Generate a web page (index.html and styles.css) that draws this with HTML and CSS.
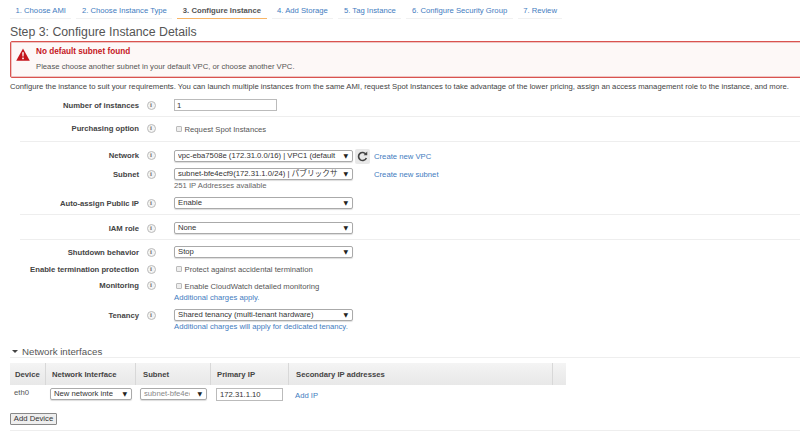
FILE: index.html
```html
<!DOCTYPE html>
<html>

	<head>
		<meta charset="UTF-8">
		<title>Step 3: Configure Instance Details</title>
		<link rel="stylesheet" href="styles.css">
	</head>

	<body>
		<ul class="tabs">
			<li>1. Choose AMI</li>
			<li>2. Choose Instance Type</li>
			<li class="active">3. Configure Instance</li>
			<li>4. Add Storage</li>
			<li>5. Tag Instance</li>
			<li>6. Configure Security Group</li>
			<li>7. Review</li>
		</ul>

		<h1>Step 3: Configure Instance Details</h1>

		<div class="alert">
			<svg class="alert-icon" viewBox="0 0 14 13" width="14" height="13">
				<path d="M7 0.5 L13.8 12.8 L0.2 12.8 Z" fill="#c4161c"/>
				<path d="M6.2 4.2 H7.8 L7.5 8.6 H6.5 Z" fill="#fff"/>
				<rect x="6.2" y="9.6" width="1.6" height="1.6" fill="#fff"/>
			</svg>
			<div>
				<div class="alert-title">No default subnet found</div>
				<div class="alert-text">Please choose another subnet in your default VPC, or choose another VPC.</div>
			</div>
		</div>

		<p class="intro">Configure the instance to suit your requirements. You can launch multiple instances from the same AMI, request Spot Instances to take advantage of the lower pricing, assign an access management role to the instance, and more.</p>

		<form>
			<div class="group g1">
				<div class="row">
					<label>Number of instances</label><span class="info">i</span>
					<div class="field"><input class="text wide" type="text" value="1"></div>
				</div>
			</div>

			<div class="group g2">
				<div class="row raised">
					<label>Purchasing option</label><span class="info">i</span>
					<div class="field"><span class="check"></span>Request Spot Instances</div>
				</div>
			</div>

			<div class="group g3">
				<div class="row raised">
					<label>Network</label><span class="info">i</span>
					<div class="field">
						<span class="select"><select><option>vpc-eba7508e (172.31.0.0/16) | VPC1 (default</option></select></span>
						<span class="refresh">
							<svg viewBox="0 0 12 12" width="11" height="11">
								<path d="M9.8 3.6 A4.4 4.4 0 1 0 10.2 7.6" fill="none" stroke="#444" stroke-width="1.8"/>
								<path d="M7.2 4.6 H11.2 V0.6 Z" fill="#444"/>
							</svg>
						</span>
						<a class="create">Create new VPC</a>
					</div>
				</div>
				<div class="row next-subnet">
					<label>Subnet</label><span class="info">i</span>
					<div class="field">
						<span class="select"><select><option>subnet-bfe4ecf9(172.31.1.0/24) | パブリックサブネット</option></select></span>
						<a class="create far">Create new subnet</a>
					</div>
				</div>
				<div class="note">251 IP Addresses available</div>
				<div class="row next-auto">
					<label>Auto-assign Public IP</label><span class="info">i</span>
					<div class="field"><span class="select"><select><option>Enable</option></select></span></div>
				</div>
			</div>

			<div class="group g4">
				<div class="row">
					<label>IAM role</label><span class="info">i</span>
					<div class="field"><span class="select"><select><option>None</option></select></span></div>
				</div>
			</div>

			<div class="group g5">
				<div class="row">
					<label>Shutdown behavior</label><span class="info">i</span>
					<div class="field"><span class="select"><select><option>Stop</option></select></span></div>
				</div>
				<div class="row next">
					<label>Enable termination protection</label><span class="info">i</span>
					<div class="field"><span class="check"></span>Protect against accidental termination</div>
				</div>
				<div class="row next raised">
					<label>Monitoring</label><span class="info">i</span>
					<div class="field"><span class="check"></span>Enable CloudWatch detailed monitoring</div>
				</div>
				<div class="note link">Additional charges apply.</div>
				<div class="row next">
					<label>Tenancy</label><span class="info">i</span>
					<div class="field"><span class="select"><select><option>Shared tenancy (multi-tenant hardware)</option></select></span></div>
				</div>
				<div class="note link">Additional charges will apply for dedicated tenancy.</div>
			</div>
		</form>

		<h2><span class="caret"></span>Network interfaces</h2>

		<table class="devices">
			<tr>
				<th class="c1">Device</th>
				<th class="c2">Network Interface</th>
				<th class="c3">Subnet</th>
				<th class="c4">Primary IP</th>
				<th class="c5">Secondary IP addresses</th>
				<th class="c6"></th>
			</tr>
			<tr>
				<td>eth0</td>
				<td><span class="select small"><select><option>New network interface</option></select></span></td>
				<td><span class="select tiny"><select class="muted"><option>subnet-bfe4ecf9</option></select></span></td>
				<td><input class="text ip" type="text" value="172.31.1.10"></td>
				<td colspan="2"><a class="add-ip">Add IP</a></td>
			</tr>
		</table>

		<button class="add-device" type="button">Add Device</button>
		<div class="end-line"></div>
	</body>

</html>
```

FILE: styles.css
```css
* {
	margin: 0;
	padding: 0;
	box-sizing: border-box;
}

html, body {
	height: 432px;
	overflow: hidden;
}

body {
	background: white;
	color: #555;
	font-family: "Liberation Sans", Arial, "Noto Sans CJK JP", sans-serif;
	font-size: 7.7px;
}

a {
	color: #3f7cc0;
}

.tabs {
	display: flex;
	gap: 5px;
	height: 19px;
	margin: 0 0 0 10px;
	padding-top: 6px;
	list-style: none;
}

.tabs li {
	height: 13px;
	padding: 0 5.5px;
	border-bottom: 1px solid #f1f1f1;
	color: #3f7cc0;
	font-size: 7.7px;
	line-height: 10px;
}

.tabs .active {
	border-bottom-color: #f7b567;
	color: #555;
	font-weight: bold;
}

h1 {
	height: 22px;
	margin-left: 10px;
	font-size: 12.3px;
	font-weight: normal;
	line-height: 26px;
}

.alert {
	display: flex;
	gap: 6px;
	width: 800px;
	height: 37px;
	margin-left: 10px;
	padding: 5px 5px;
	background: #fdf8f7;
	border: 1px solid #d9534f;
	border-radius: 2px;
	box-shadow: 0 0 0 1px #f0c4c2 inset;
}

.alert-icon {
	flex: none;
	margin-top: 1px;
}

.alert-title {
	color: #c4161c;
	font-size: 8.2px;
	font-weight: bold;
	line-height: 10px;
}

.alert-text {
	margin-top: 4px;
	font-size: 7.7px;
	line-height: 12px;
}

.intro {
	height: 17px;
	margin-left: 10px;
	color: #444;
	font-size: 7.7px;
	line-height: 17px;
	white-space: nowrap;
}

form {
	margin-left: 20px;
	margin-top: 4px;
}

.group {
	border-bottom: 1px solid #eee;
}

.g1 {
	padding-bottom: 5px;
}

.g2 {
	padding: 6px 0;
}

.g3 {
	padding: 8px 0 5px;
}

.g4 {
	padding: 7px 0 5px;
}

.g5 {
	padding: 6px 0 0;
	border-bottom: none;
}

.row {
	display: flex;
	align-items: center;
	height: 12px;
}

.next {
	margin-top: 5px;
}

.next-subnet {
	margin-top: 6px;
}

.next-auto {
	margin-top: 7px;
}

.raised label,
.raised .info {
	margin-bottom: 2px;
}

label {
	width: 119px;
	color: #444;
	font-size: 7.7px;
	font-weight: bold;
	text-align: right;
	white-space: nowrap;
}

.info {
	flex: none;
	width: 9px;
	height: 9px;
	margin: 0 18.5px 0 7.5px;
	border: 1px solid #bbb;
	border-radius: 50%;
	background: #f4f4f4;
	color: #777;
	font-family: "Liberation Serif", serif;
	font-size: 7px;
	font-weight: bold;
	line-height: 7px;
	text-align: center;
}

.field {
	display: flex;
	align-items: center;
	white-space: nowrap;
}

.check {
	flex: none;
	width: 6px;
	height: 6px;
	margin: 0 2.5px 0 2px;
	background: #eee;
	border: 1px solid #bbb;
	border-radius: 1px;
}

.note {
	height: 10px;
	margin-left: 154px;
	color: #666;
	font-size: 7.7px;
	line-height: 12px;
}

.g5 .note {
	height: 12px;
	line-height: 12px;
}

.link {
	color: #3f7cc0;
}

.select {
	position: relative;
	display: block;
	flex: none;
	width: 179px;
	height: 12px;
}

.select::after {
	content: "▼";
	position: absolute;
	top: 1px;
	right: 5px;
	color: #222;
	font-family: "DejaVu Sans", sans-serif;
	font-size: 6px;
	line-height: 10px;
}

select {
	display: block;
	width: 100%;
	height: 100%;
	padding: 0 14px 0 3px;
	appearance: none;
	background: white;
	border: 1px solid #aaa;
	border-radius: 2px;
	box-shadow: 0 1px 1px #ddd;
	color: #333;
	font-family: "Liberation Sans", "Noto Sans CJK JP", sans-serif;
	font-size: 7.7px;
	line-height: 10px;
}

.muted {
	color: #888;
}

.text {
	display: block;
	height: 12px;
	padding-left: 2px;
	background: white;
	border: 1px solid #bbb;
	color: #333;
	font-family: "Liberation Sans", sans-serif;
	font-size: 7.7px;
}

.wide {
	width: 103px;
}

.refresh {
	display: flex;
	flex: none;
	align-items: center;
	justify-content: center;
	width: 15px;
	height: 15px;
	margin: 0 4px 0 2px;
	background: #e8e8e8;
	border-radius: 2px;
}

.create {
	font-size: 7.7px;
}

.far {
	margin-left: 21px;
}

h2 {
	display: flex;
	align-items: center;
	height: 21px;
	margin: 4px 0 0 10px;
	padding-top: 8px;
	border-bottom: 1px solid #eee;
	font-size: 9.7px;
	font-weight: normal;
}

.caret {
	width: 0;
	height: 0;
	margin: 0 4px 0 2px;
	border-top: 3px solid #444;
	border-left: 3px solid transparent;
	border-right: 3px solid transparent;
}

.devices {
	width: 556px;
	margin: 5px 0 0 10px;
	border-collapse: collapse;
	table-layout: fixed;
}

.devices th {
	height: 22px;
	padding-left: 6px;
	background: linear-gradient(#f4f4f4, #e8e8e8);
	color: #444;
	font-size: 7.7px;
	text-align: left;
}

.devices .c1 {
	padding-left: 5px;
}

.devices .c3,
.devices .c5 {
	padding-left: 7px;
}

.devices th:not(:last-child) {
	box-shadow: inset -1px 0 0 #d8d8d8;
}

.devices td {
	height: 17px;
	padding: 3px 0 0 4px;
	font-size: 7.7px;
	vertical-align: top;
}

.c1 {
	width: 36px;
}

.c2 {
	width: 90px;
}

.c3 {
	width: 75px;
}

.c4 {
	width: 78px;
}

.c5 {
	width: 264px;
}

.c6 {
	width: 13px;
}

.small {
	width: 82px;
}

.small select {
	padding-right: 18px;
}

.tiny {
	width: 67px;
}

.tiny select {
	padding-right: 16px;
}

.ip {
	width: 67px;
	height: 13px;
	margin-left: 1px;
	padding-left: 3px;
}

.add-ip {
	display: block;
	margin: 2px 0 0 2px;
	line-height: 12px;
}

.add-device {
	display: block;
	width: 47px;
	height: 12px;
	margin: 11px 0 0 10px;
	background: #eee;
	border: 1px solid #888;
	border-radius: 1px;
	color: #333;
	font-family: "Liberation Sans", sans-serif;
	font-size: 7.7px;
	line-height: 10px;
}

.end-line {
	height: 1px;
	margin: 5px 0 0 10px;
	background: #eee;
}
```
